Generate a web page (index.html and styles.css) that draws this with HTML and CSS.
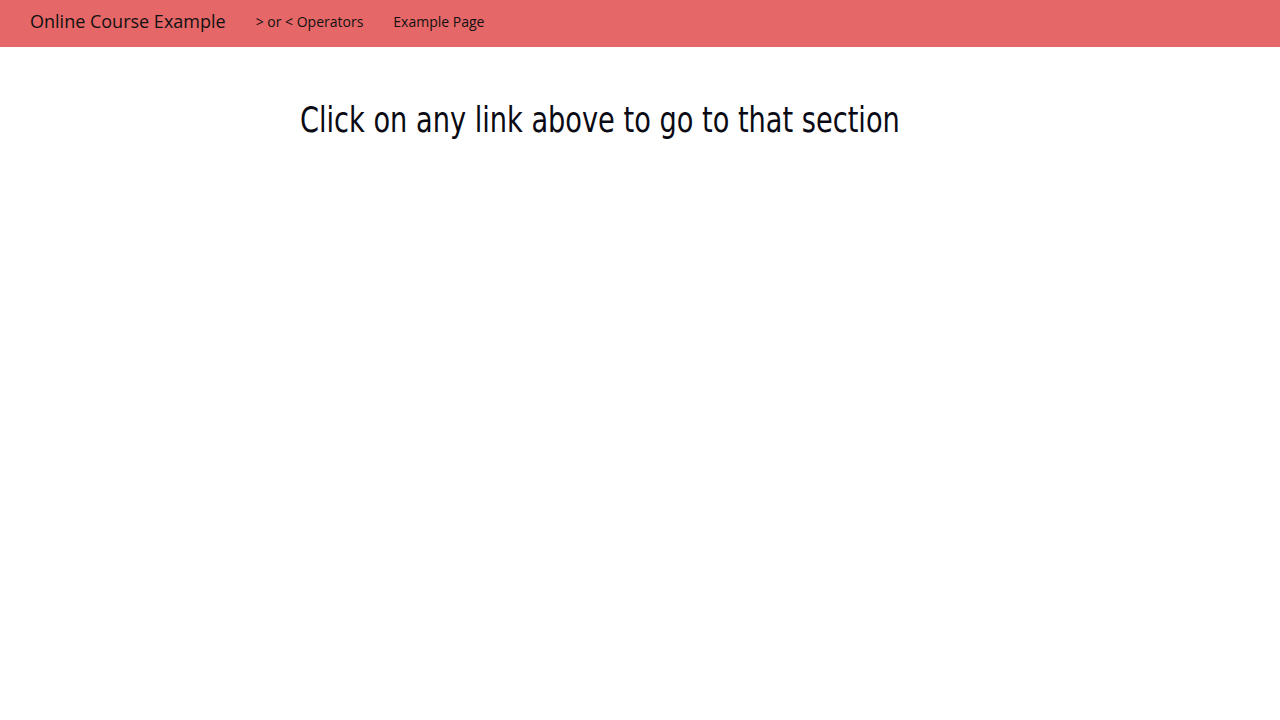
FILE: index.html
```html
<!DOCTYPE html>
<html>
<head>
<meta charset="utf-8">
<title>Online Course Example</title>
<link rel="stylesheet" href="styles.css">
</head>
<body>
<nav class="navbar">
  <a class="brand" href="#">Online Course Example</a>
  <ul class="nav-links">
    <li><a href="#">&gt; or &lt; Operators</a></li>
    <li><a href="#">Example Page</a></li>
  </ul>
</nav>
<main class="content">
  <h1 class="title">Click on any link above to go to that section</h1>
</main>
</body>
</html>
```
FILE: styles.css
```css
html, body {
  margin: 0;
  padding: 0;
  background: #ffffff;
}
body {
  font-family: "Open Sans", "Liberation Sans", sans-serif;
  color: #111;
}
.navbar {
  display: flex;
  align-items: center;
  height: 47px;
  background: #e66767;
  padding: 0 0 6px 30px;
  box-sizing: border-box;
}
.brand {
  font-size: 18px;
  color: #111;
  text-decoration: none;
  line-height: 20px;
  margin-top: 1px;
}
.nav-links {
  display: flex;
  list-style: none;
  margin: 0 0 0 30px;
  padding: 0;
  gap: 30px;
}
.nav-links a {
  font-size: 14px;
  color: #111;
  text-decoration: none;
  line-height: 20px;
}
.content {
  padding: 53px 0 0 300px;
}
.title {
  margin: 0;
  display: inline-block;
  font-family: "DejaVu Sans Condensed", "DejaVu Sans", sans-serif;
  font-weight: normal;
  font-size: 36px;
  line-height: 40px;
  color: #0a0a14;
  transform: scaleX(0.84);
  transform-origin: left center;
}
```
